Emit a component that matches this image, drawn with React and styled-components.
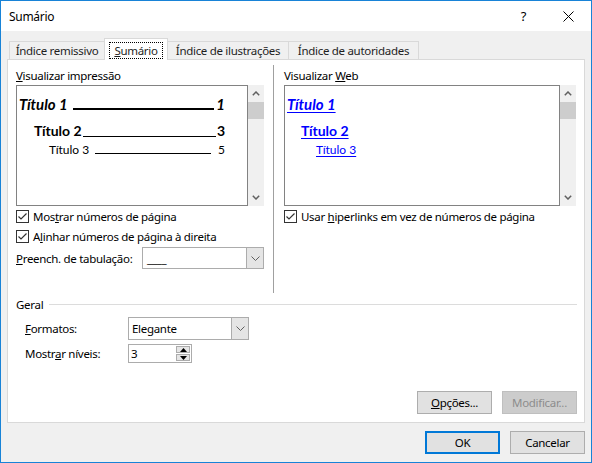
import styled, { createGlobalStyle } from "styled-components";

const UI_FONT = `"Noto Sans", "Segoe UI", sans-serif`;
const DOC_FONT = `Lato, "Noto Sans", sans-serif`;

const GlobalStyle = createGlobalStyle`
  * { box-sizing: border-box; }
  body {
    margin: 0;
    background: #fff;
    font-family: ${UI_FONT};
    font-size: 11.5px;
    letter-spacing: -0.3px;
    color: #000;
  }
`;

const Window = styled.div`
  width: 592px;
  height: 463px;
  border: 1px solid #1883d7;
  display: flex;
  flex-direction: column;
  background: #f0f0f0;
`;

const TitleBar = styled.div`
  height: 30px;
  background: #fff;
  display: flex;
  align-items: center;
  padding-left: 8px;
`;

const Title = styled.div`
  flex: 1;
  font-size: 12px;
`;

const TitleButton = styled.div`
  width: 45px;
  height: 30px;
  display: flex;
  align-items: center;
  justify-content: center;
  font-size: 13px;
  color: #000;
`;

const Body = styled.div`
  flex: 1;
  display: flex;
  flex-direction: column;
  padding: 7px 6px 8px 6px;
`;

const TabRow = styled.div`
  display: flex;
  align-items: flex-end;
  height: 22px;
  padding-left: 2px;
  margin-bottom: -1px;
  position: relative;
  z-index: 1;
`;

const Tab = styled.div`
  width: ${(p) => p.w}px;
  height: ${(p) => (p.active ? 22 : 18)}px;
  margin-bottom: ${(p) => (p.active ? 0 : 1)}px;
  margin-left: -1px;
  &:first-child { margin-left: 0; }
  border: 1px solid #d9d9d9;
  border-bottom: none;
  background: ${(p) => (p.active ? "#fff" : "#f0f0f0")};
  z-index: ${(p) => (p.active ? 2 : 1)};
  display: flex;
  align-items: center;
  justify-content: center;
  padding-top: ${(p) => (p.active ? 1 : 0)}px;
  color: #1e1e1e;
  white-space: nowrap;
`;

const FocusRect = styled.span`
  border: 1px dotted #000;
  padding: 0 4px;
  line-height: 15px;
`;

const Panel = styled.div`
  flex: 1;
  background: #fff;
  border: 1px solid #d9d9d9;
  display: flex;
  flex-direction: column;
  padding: 5px 7px 8px 8px;
`;

const TopSection = styled.div`
  display: flex;
  height: 228px;
`;

const Column = styled.div`
  width: ${(p) => p.w}px;
  display: flex;
  flex-direction: column;
`;

const VDivider = styled.div`
  width: 1px;
  background: #a0a0a0;
  margin: 0 10px 0 9px;
`;

const Label = styled.div`
  height: 20px;
  padding-top: 2px;
  line-height: 18px;
  white-space: nowrap;
`;

const PreviewRow = styled.div`
  display: flex;
  height: 121px;
`;

const PreviewBox = styled.div`
  flex: 1;
  border: 1px solid #828282;
  background: #fff;
  display: flex;
  flex-direction: column;
  padding: 0 22px 0 2px;
  letter-spacing: 0;
`;

const Scrollbar = styled.div`
  width: 16px;
  background: #f0f0f0;
  display: flex;
  flex-direction: column;
`;

const ScrollArrow = styled.div`
  height: 17px;
  display: flex;
  align-items: center;
  justify-content: center;
`;

const Thumb = styled.div`
  height: 17px;
  background: #cdcdcd;
`;

const ScrollTrack = styled.div`
  flex: 1;
`;

const levelStyles = {
  1: { size: 15, weight: 700, style: "italic", indent: 0, top: 8, height: 20 },
  2: { size: 14, weight: 700, style: "normal", indent: 15, top: 7, height: 20 },
  3: { size: 12, weight: 400, style: "normal", indent: 30, top: 1, height: 16 },
};

const PrintEntry = styled.div`
  display: flex;
  align-items: flex-end;
  height: ${(p) => levelStyles[p.level].height}px;
  margin-top: ${(p) => levelStyles[p.level].top}px;
  padding-left: ${(p) => levelStyles[p.level].indent}px;
  font-family: ${DOC_FONT};
  font-size: ${(p) => levelStyles[p.level].size}px;
  font-weight: ${(p) => levelStyles[p.level].weight};
  font-style: ${(p) => levelStyles[p.level].style};
  line-height: ${(p) => levelStyles[p.level].height}px;
  white-space: nowrap;
`;

const Leader = styled.span`
  flex: 1;
  align-self: stretch;
  border-bottom: ${(p) => p.weight}px solid #000;
  margin: 0 ${(p) => p.gapRight}px 4px ${(p) => p.gapLeft}px;
`;

const WebEntry = styled.div`
  height: ${(p) => levelStyles[p.level].height}px;
  margin-top: ${(p) => levelStyles[p.level].top}px;
  padding-left: ${(p) => levelStyles[p.level].indent - (p.level === 1 ? 0 : 1)}px;
  font-family: ${DOC_FONT};
  font-size: ${(p) => levelStyles[p.level].size}px;
  font-weight: ${(p) => levelStyles[p.level].weight};
  font-style: ${(p) => levelStyles[p.level].style};
  line-height: ${(p) => levelStyles[p.level].height}px;
  color: #0000ff;
  span { text-decoration: underline; text-underline-offset: 2px; }
`;

const CheckRow = styled.div`
  display: flex;
  align-items: center;
  height: 20px;
  white-space: nowrap;
`;

const CheckBox = styled.span`
  width: 13px;
  height: 13px;
  border: 1px solid #333;
  background: #fff;
  margin-right: 4px;
  display: flex;
  align-items: center;
  justify-content: center;
`;

const FieldRow = styled.div`
  display: flex;
  align-items: center;
  height: ${(p) => p.h}px;
  margin-top: ${(p) => p.top}px;
  white-space: nowrap;
`;

const FieldLabel = styled.div`
  width: ${(p) => p.w}px;
`;

const Select = styled.div`
  width: ${(p) => p.w}px;
  height: 100%;
  border: 1px solid #acacac;
  display: flex;
  background: #fff;
`;

const SelectValue = styled.div`
  flex: 1;
  display: flex;
  align-items: center;
  padding-left: ${(p) => p.pad}px;
`;

const SelectArrow = styled.div`
  width: 17px;
  border-left: 1px solid #acacac;
  background: #e5e5e5;
  display: flex;
  align-items: center;
  justify-content: center;
`;

const Spin = styled.div`
  width: ${(p) => p.w}px;
  height: 100%;
  border: 1px solid #acacac;
  display: flex;
  background: #fff;
`;

const SpinValue = styled.div`
  flex: 1;
  display: flex;
  align-items: center;
  padding-left: 2px;
`;

const SpinButtons = styled.div`
  width: 16px;
  display: flex;
  flex-direction: column;
  padding: 1px;
  gap: 1px;
`;

const SpinButton = styled.div`
  flex: 1;
  background: #e5e5e5;
  border: 1px solid #acacac;
  display: flex;
  align-items: center;
  justify-content: center;
`;

const GroupHeader = styled.div`
  display: flex;
  align-items: center;
  height: 18px;
  margin-top: 2px;
`;

const GroupLine = styled.div`
  flex: 1;
  height: 1px;
  background: #dcdcdc;
  margin-left: 6px;
`;

const GroupBody = styled.div`
  padding-left: 9px;
`;

const ButtonRow = styled.div`
  display: flex;
  justify-content: flex-end;
  gap: 10px;
  margin-top: ${(p) => (p.push ? "auto" : "8px")};
`;

const Button = styled.div`
  width: 75px;
  height: 23px;
  display: flex;
  align-items: center;
  justify-content: center;
  background: ${(p) => (p.disabled ? "#cccccc" : "#e1e1e1")};
  border: ${(p) => (p.primary ? "2px solid #0078d7" : `1px solid ${p.disabled ? "#bfbfbf" : "#adadad"}`)};
  color: ${(p) => (p.disabled ? "#8c8c8c" : "#000")};
  white-space: nowrap;
`;

const Chevron = ({ down }) => (
  <svg width="8" height="5" viewBox="0 0 8 5">
    <polyline
      points={down ? "0.8,0.8 4,4 7.2,0.8" : "0.8,4.2 4,1 7.2,4.2"}
      fill="none"
      stroke="#606060"
      strokeWidth="1.5"
    />
  </svg>
);

const ScrollBar = () => (
  <Scrollbar>
    <ScrollArrow>
      <Chevron />
    </ScrollArrow>
    <Thumb />
    <ScrollTrack />
    <ScrollArrow>
      <Chevron down />
    </ScrollArrow>
  </Scrollbar>
);

const Check = () => (
  <CheckBox>
    <svg width="11" height="11" viewBox="0 0 11 11">
      <polyline points="1.5,5.5 4,8 9.5,2.5" fill="none" stroke="#333" strokeWidth="1.2" />
    </svg>
  </CheckBox>
);

const DropChevron = () => (
  <svg width="9" height="5" viewBox="0 0 9 5">
    <polyline points="0.5,0.5 4.5,4.5 8.5,0.5" fill="none" stroke="#606060" strokeWidth="1" />
  </svg>
);

const Triangle = ({ down }) => (
  <svg width="7" height="4" viewBox="0 0 7 4">
    <polygon points={down ? "0,0 7,0 3.5,4" : "0,4 7,4 3.5,0"} fill="#000" />
  </svg>
);

export default function App() {
  return (
    <>
      <GlobalStyle />
      <Window>
        <TitleBar>
          <Title>Sumário</Title>
          <TitleButton>?</TitleButton>
          <TitleButton>
            <svg width="11" height="11" viewBox="0 0 11 11">
              <path d="M0.5 0.5 L10.5 10.5 M10.5 0.5 L0.5 10.5" stroke="#000" strokeWidth="1" />
            </svg>
          </TitleButton>
        </TitleBar>
        <Body>
          <TabRow>
            <Tab w={96}>Índice remissivo</Tab>
            <Tab w={64} active>
              <FocusRect>
                <u>S</u>umário
              </FocusRect>
            </Tab>
            <Tab w={122}>Índice de ilustrações</Tab>
            <Tab w={131}>Índice de autoridades</Tab>
          </TabRow>
          <Panel>
            <TopSection>
              <Column w={248}>
                <Label>
                  <u>V</u>isualizar impressão
                </Label>
                <PreviewRow>
                  <PreviewBox>
                    <PrintEntry level={1}>
                      Título 1<Leader weight={2} gapLeft={5} gapRight={2} />1
                    </PrintEntry>
                    <PrintEntry level={2}>
                      Título 2<Leader weight={1.5} gapLeft={1} gapRight={1} />3
                    </PrintEntry>
                    <PrintEntry level={3}>
                      Título 3<Leader weight={1} gapLeft={6} gapRight={7} />5
                    </PrintEntry>
                  </PreviewBox>
                  <ScrollBar />
                </PreviewRow>
                <CheckRow>
                  <Check />
                  <span>
                    Mos<u>t</u>rar números de página
                  </span>
                </CheckRow>
                <CheckRow>
                  <Check />
                  <span>
                    A<u>l</u>inhar números de página à direita
                  </span>
                </CheckRow>
                <FieldRow h={22} top={1}>
                  <FieldLabel w={126}>
                    <u>P</u>reench. de tabulação:
                  </FieldLabel>
                  <Select w={122}>
                    <SelectValue pad={4}>____</SelectValue>
                    <SelectArrow>
                      <DropChevron />
                    </SelectArrow>
                  </Select>
                </FieldRow>
              </Column>
              <VDivider />
              <Column w={292}>
                <Label>
                  Visualizar <u>W</u>eb
                </Label>
                <PreviewRow>
                  <PreviewBox>
                    <WebEntry level={1}>
                      <span>Título 1</span>
                    </WebEntry>
                    <WebEntry level={2}>
                      <span>Título 2</span>
                    </WebEntry>
                    <WebEntry level={3}>
                      <span>Título 3</span>
                    </WebEntry>
                  </PreviewBox>
                  <ScrollBar />
                </PreviewRow>
                <CheckRow>
                  <Check />
                  <span>
                    Usar <u>h</u>iperlinks em vez de números de página
                  </span>
                </CheckRow>
              </Column>
            </TopSection>
            <GroupHeader>
              Geral
              <GroupLine />
            </GroupHeader>
            <GroupBody>
              <FieldRow h={23} top={4}>
                <FieldLabel w={103}>
                  <u>F</u>ormatos:
                </FieldLabel>
                <Select w={121}>
                  <SelectValue pad={3}>Elegante</SelectValue>
                  <SelectArrow>
                    <DropChevron />
                  </SelectArrow>
                </Select>
              </FieldRow>
              <FieldRow h={19} top={4}>
                <FieldLabel w={103}>
                  Mostr<u>a</u>r níveis:
                </FieldLabel>
                <Spin w={64}>
                  <SpinValue>3</SpinValue>
                  <SpinButtons>
                    <SpinButton>
                      <Triangle />
                    </SpinButton>
                    <SpinButton>
                      <Triangle down />
                    </SpinButton>
                  </SpinButtons>
                </Spin>
              </FieldRow>
            </GroupBody>
            <ButtonRow push>
              <Button>
                <span>
                  <u>O</u>pções...
                </span>
              </Button>
              <Button disabled>Modificar...</Button>
            </ButtonRow>
          </Panel>
          <ButtonRow>
            <Button primary>OK</Button>
            <Button>Cancelar</Button>
          </ButtonRow>
        </Body>
      </Window>
    </>
  );
}
